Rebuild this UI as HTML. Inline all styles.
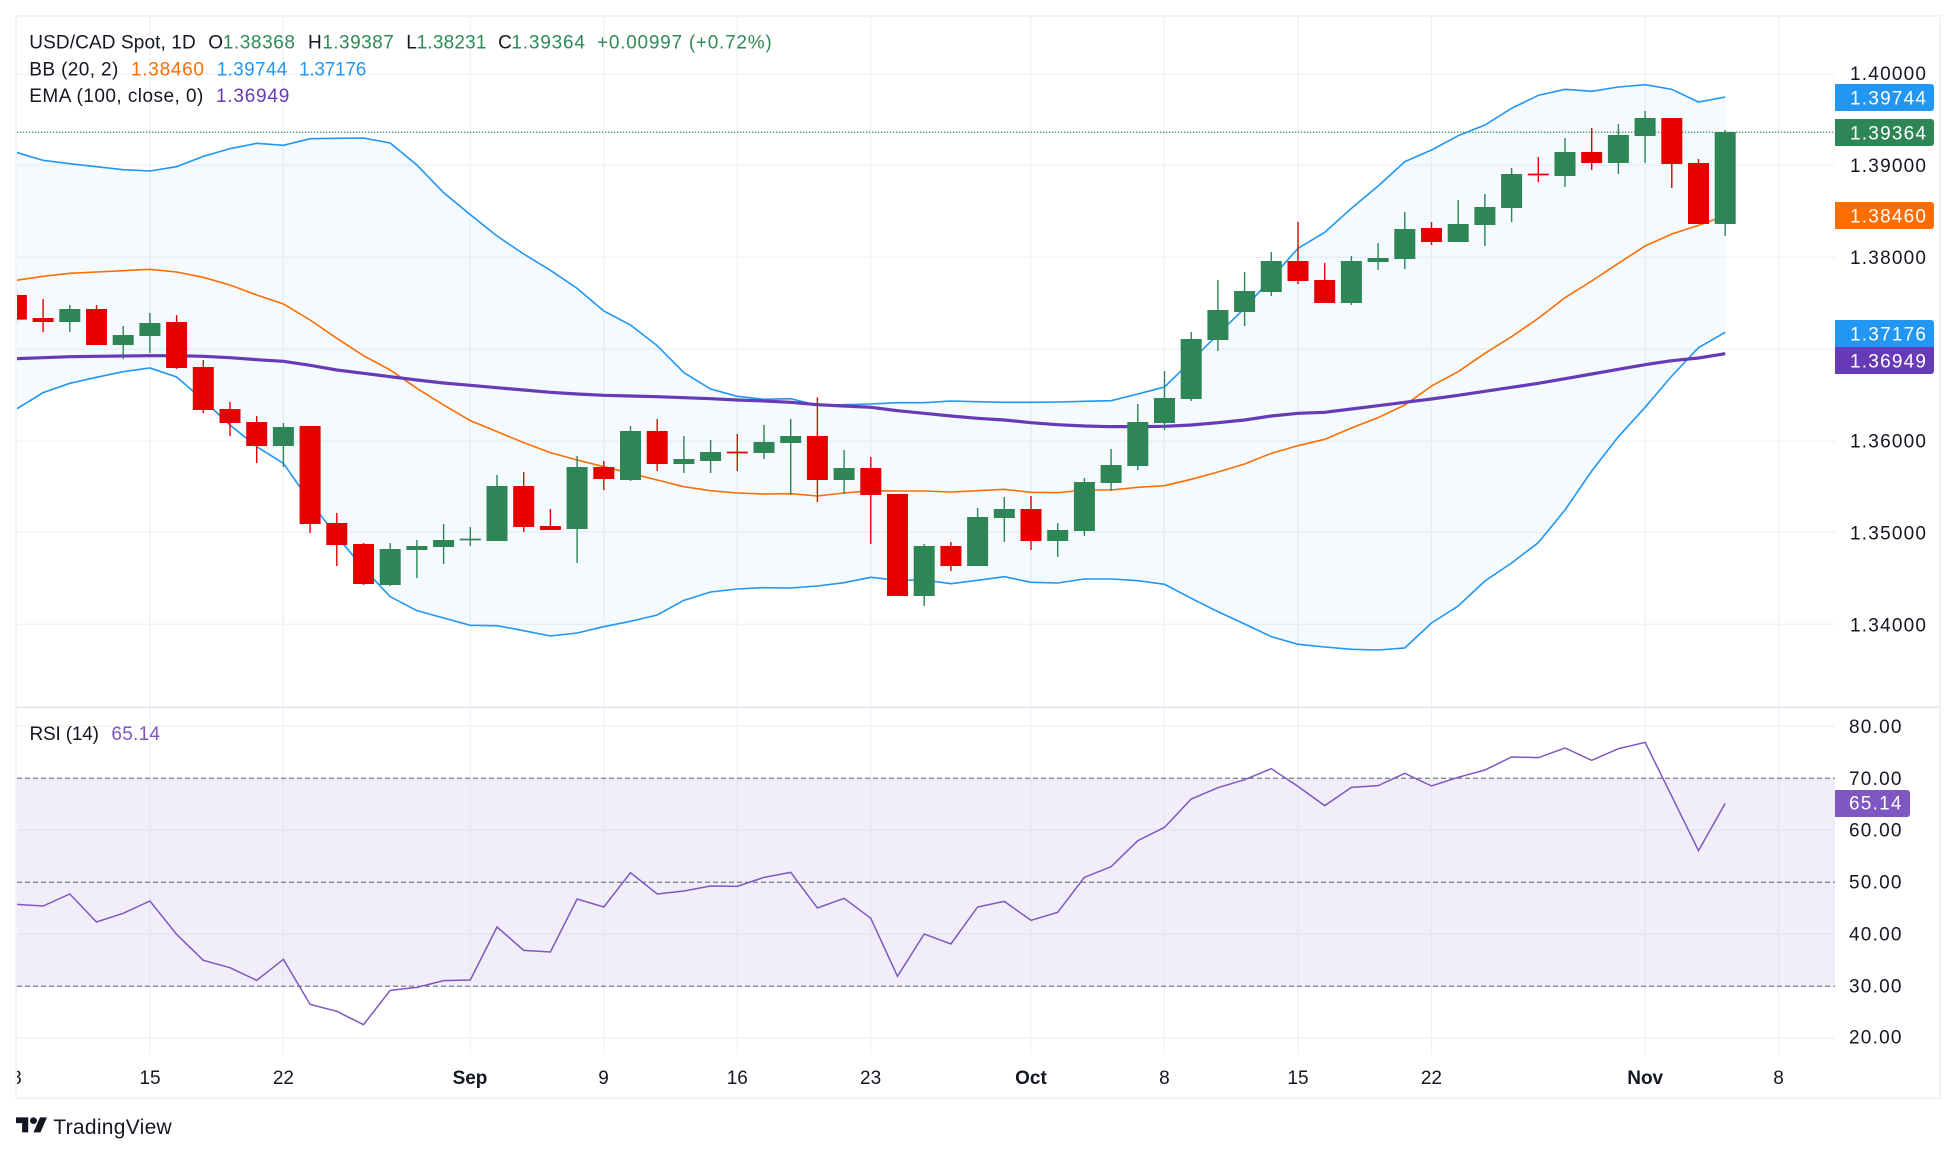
<!DOCTYPE html>
<html lang="en"><head><meta charset="utf-8"><title>USD/CAD Spot</title>
<style>
html,body{margin:0;padding:0;background:#fff;width:1956px;height:1154px;overflow:hidden}
svg{display:block}
text{font-family:"Liberation Sans",sans-serif;font-size:19px;fill:#131722}
.g{fill:#2e8b57}.w{fill:#fff}
.m{text-anchor:middle}.b{font-weight:700}
.l{fill:none;vector-effect:non-scaling-stroke;stroke-linejoin:miter}
</style></head><body>
<svg width="1956" height="1154" viewBox="0 0 1956 1154" xmlns="http://www.w3.org/2000/svg">
<defs><clipPath id="c"><rect x="17" y="17" width="1818" height="1037"/></clipPath>
<clipPath id="t"><rect x="17" y="1054" width="1922" height="42"/></clipPath></defs>
<rect width="1956" height="1154" fill="#fff"/>
<rect x="16" y="16" width="1924" height="1082" fill="#fff" stroke="#f0f3fa" stroke-width="2"/>

<!-- RSI band -->
<rect x="17" y="778.3" width="1818" height="208" fill="#7e57c2" fill-opacity=".1"/>

<!-- grid -->
<g stroke="#f0f3fa" stroke-width="1.5" fill="none">
<path d="M17 74.3H1835M17 165.3H1835M17 257.3H1835M17 349.3H1835M17 441.3H1835M17 532.3H1835M17 624.3H1835M17 726.3H1835M17 830.3H1835M17 934.3H1835M17 1038.3H1835"/>
<path d="M150 17V1054M283.4 17V1054M470.3 17V1054M603.6 17V1054M737.3 17V1054M870.6 17V1054M1031 17V1054M1164.4 17V1054M1298 17V1054M1431.4 17V1054M1645.2 17V1054M1778.5 17V1054"/>
</g>
<g stroke="#131722" stroke-opacity=".05" stroke-width="1.5" fill="none">
<path d="M17 830.3H1835M17 934.3H1835M150 778V986M283.4 778V986M470.3 778V986M603.6 778V986M737.3 778V986M870.6 778V986M1031 778V986M1164.4 778V986M1298 778V986M1431.4 778V986M1645.2 778V986M1778.5 778V986"/>
</g>
<rect x="17" y="706.5" width="1922" height="1.5" fill="#e0e3eb"/>
<path d="M17 778.3H1835M17 882.3H1835M17 986.3H1835" stroke="#787b86" stroke-width="1.25" stroke-dasharray="5 3" fill="none"/>

<g clip-path="url(#c)">
<g transform="translate(16.4,0) scale(26.7,.33333)">
<polygon fill="#2196f3" fill-opacity=".05" points="0,457 1,481 2,491 3,500 4,509 5,513 6,500 7,469 8,446 9,430 10,436 11,416 12,415 13,414 14,429 15,495 16,578 17,644 18,708 19,762 20,811 21,865 22,933 23,975 24,1037 25,1118 26,1167 27,1189 28,1198 29,1196 30,1216 31,1214 32,1212 33,1208 34,1208 35,1203 36,1205 37,1207 38,1207 39,1206 40,1204 41,1202 42,1182 43,1161 44,1083 45,1003 46,925 47,835 48,745 49,697 50,625 51,558 52,485 53,450 54,407 55,375 56,325 57,286 58,268 59,274 60,261 61,254 62,268 63,306 64,291 64,997 63,1043 62,1128 61,1222 60,1310 59,1413 58,1530 57,1628 56,1689 55,1743 54,1818 53,1869 52,1944 51,1950 50,1948 49,1941 48,1933 47,1910 46,1872 45,1835 44,1795 43,1753 42,1742 41,1737 40,1737 39,1749 38,1747 37,1730 36,1741 35,1751 34,1740 33,1741 32,1732 31,1748 30,1758 29,1764 28,1763 27,1767 26,1776 25,1801 24,1845 23,1864 22,1880 21,1899 20,1908 19,1892 18,1877 17,1876 16,1854 15,1832 14,1790 13,1705 12,1608 11,1505 10,1390 9,1340 8,1275 7,1200 6,1131 5,1104 4,1115 3,1132 2,1150 1,1178 0,1227"/>
<polyline class="l" stroke="#2196f3" stroke-width="1.6" points="0,457 1,481 2,491 3,500 4,509 5,513 6,500 7,469 8,446 9,430 10,436 11,416 12,415 13,414 14,429 15,495 16,578 17,644 18,708 19,762 20,811 21,865 22,933 23,975 24,1037 25,1118 26,1167 27,1189 28,1198 29,1196 30,1216 31,1214 32,1212 33,1208 34,1208 35,1203 36,1205 37,1207 38,1207 39,1206 40,1204 41,1202 42,1182 43,1161 44,1083 45,1003 46,925 47,835 48,745 49,697 50,625 51,558 52,485 53,450 54,407 55,375 56,325 57,286 58,268 59,274 60,261 61,254 62,268 63,306 64,291"/>
<polyline class="l" stroke="#2196f3" stroke-width="1.6" points="0,1227 1,1178 2,1150 3,1132 4,1115 5,1104 6,1131 7,1200 8,1275 9,1340 10,1390 11,1505 12,1608 13,1705 14,1790 15,1832 16,1854 17,1876 18,1877 19,1892 20,1908 21,1899 22,1880 23,1864 24,1845 25,1801 26,1776 27,1767 28,1763 29,1764 30,1758 31,1748 32,1732 33,1741 34,1740 35,1751 36,1741 37,1730 38,1747 39,1749 40,1737 41,1737 42,1742 43,1753 44,1795 45,1835 46,1872 47,1910 48,1933 49,1941 50,1948 51,1950 52,1944 53,1869 54,1818 55,1743 56,1689 57,1628 58,1530 59,1413 60,1310 61,1222 62,1128 63,1043 64,997"/>
<polyline class="l" stroke="#ff6d00" stroke-width="1.6" points="0,841 1,829 2,820 3,816 4,812 5,808 6,816 7,832 8,855 9,885 10,912 11,960 12,1015 13,1067 14,1110 15,1165 16,1215 17,1262 18,1295 19,1328 20,1358 21,1380 22,1400 23,1420 24,1440 25,1460 26,1472 27,1479 28,1482 29,1481 30,1488 31,1479 32,1472 33,1473 34,1473 35,1476 36,1472 37,1468 38,1477 39,1478 40,1470 41,1470 42,1462 43,1457 44,1438 45,1416 46,1392 47,1360 48,1337 49,1318 50,1284 51,1253 52,1215 53,1158 54,1115 55,1060 56,1010 57,955 58,893 59,843 60,790 61,738 62,702 63,676 64,647"/>
<polyline class="l" stroke="#673ab7" stroke-width="3.2" points="0,1076 1,1073 2,1070 3,1069 4,1068 5,1067 6,1067 7,1069 8,1073 9,1079 10,1084 11,1096 12,1110 13,1120 14,1130 15,1140 16,1149 17,1156 18,1163 19,1170 20,1177 21,1182 22,1186 23,1188 24,1190 25,1193 26,1196 27,1200 28,1203 29,1207 30,1214 31,1218 32,1222 33,1232 34,1240 35,1248 36,1255 37,1260 38,1268 39,1274 40,1278 41,1280 42,1280 43,1279 44,1275 45,1268 46,1260 47,1248 48,1240 49,1237 50,1227 51,1217 52,1207 53,1197 54,1186 55,1174 56,1162 57,1150 58,1136 59,1122 60,1108 61,1094 62,1082 63,1074 64,1061"/>
</g>
<path d="M17 132.3H1835" stroke="#2e8b57" stroke-width="1.25" stroke-dasharray="1.25 1.75" fill="none"/>
<g transform="translate(16.4,0) scale(26.7,.33333)">
<path class="l" stroke="#e60000" stroke-width="1.4" d="M0 867V975M1 897V996M3 915V1035M6 945V1107M7 1080V1239M8 1206V1308M9 1248V1389M11 1278V1599M12 1539V1698M13 1629V1755M19 1416V1596M20 1527V1590M22 1383V1470M24 1257V1413M27 1302V1413M30 1192V1506M32 1371V1632M33 1482V1788M35 1626V1713M38 1488V1650M48 666V852M49 789V909M53 666V735M57 471V546M59 384V510M62 354V564M63 477V672"/>
<path class="l" stroke="#e60000" stroke-width="21" d="M0 885V959M1 954V966M3 927V1035M6 966V1104M7 1101V1230M8 1227V1269M9 1266V1338M11 1278V1572M12 1569V1635M13 1632V1752M19 1458V1581M20 1578V1590M22 1401V1437M24 1293V1392M27 1355V1360M30 1308V1440M32 1404V1485M33 1482V1788M35 1638V1698M38 1527V1623M48 783V843M49 840V909M53 684V726M57 521V526M59 456V489M62 354V492M63 489V672"/>
<path class="l" stroke="#2e8656" stroke-width="1.4" d="M2 915V996M4 978V1077M5 939V1059M10 1269V1401M14 1629V1758M15 1620V1734M16 1572V1692M17 1581V1638M18 1425V1623M21 1368V1689M23 1278V1443M25 1308V1419M26 1320V1419M28 1275V1377M29 1257V1485M31 1350V1482M34 1632V1818M36 1524V1698M37 1491V1626M39 1569V1671M40 1434V1608M41 1347V1473M42 1212V1410M43 1113V1290M44 996V1203M45 840V1053M46 816V978M47 756V888M50 768V915M51 729V810M52 636V807M54 600V726M55 582V738M56 504V666M58 414V561M60 372V522M61 333V489M64 390V708"/>
<path class="l" stroke="#2e8656" stroke-width="21" d="M2 927V966M4 1005V1035M5 969V1008M10 1281V1338M14 1647V1755M15 1638V1650M16 1620V1641M17 1616V1621M18 1458V1623M21 1401V1587M23 1293V1440M25 1377V1392M26 1356V1383M28 1326V1359M29 1308V1329M31 1404V1440M34 1638V1788M36 1551V1698M37 1527V1554M39 1590V1623M40 1446V1593M41 1395V1449M42 1266V1398M43 1194V1269M44 1017V1197M45 930V1020M46 873V936M47 783V876M50 783V909M51 774V786M52 687V777M54 672V726M55 621V675M56 522V624M58 456V528M60 405V489M61 354V408M64 396V672"/>
</g>
<g transform="translate(16.4,754) scale(26.7,.33333)">
<polyline class="l" stroke="#7e57c2" stroke-width="1.5" points="0,451 1,456 2,420 3,504 4,478 5,441 6,541 7,619 8,641 9,679 10,616 11,751 12,772 13,812 14,709 15,700 16,680 17,678 18,519 19,589 20,594 21,435 22,459 23,356 24,420 25,411 26,396 27,397 28,370 29,355 30,462 31,433 32,493 33,667 34,540 35,570 36,459 37,442 38,499 39,475 40,370 41,338 42,260 43,220 44,135 45,101 46,77 47,44 48,97 49,155 50,100 51,95 52,58 53,96 54,70 55,48 56,9 57,11 58,-18 59,19 60,-16 61,-35 62,127 63,290 64,148"/>
</g>
</g>

<!-- legend -->
<text x="29.3" y="48.5" textLength="166.4">USD/CAD Spot, 1D</text>
<text x="208.3" y="48.5">O</text><text class="g" x="222.7" y="48.5" textLength="72.3">1.38368</text>
<text x="308" y="48.5">H</text><text class="g" x="322.2" y="48.5" textLength="71.6">1.39387</text>
<text x="406.2" y="48.5">L</text><text class="g" x="416.6" y="48.5" textLength="69.9">1.38231</text>
<text x="498.1" y="48.5">C</text><text class="g" x="511.4" y="48.5" textLength="73.6">1.39364</text>
<text class="g" x="597" y="48.5" textLength="174.7">+0.00997 (+0.72%)</text>
<text x="29.3" y="75.5" textLength="89">BB (20, 2)</text>
<text x="131" y="75.5" textLength="73" style="fill:#ff6d00">1.38460</text>
<text x="216.7" y="75.5" textLength="70.6" style="fill:#2196f3">1.39744</text>
<text x="299" y="75.5" textLength="67.3" style="fill:#2196f3">1.37176</text>
<text x="29.3" y="102" textLength="174">EMA (100, close, 0)</text>
<text x="216" y="102" textLength="73.3" style="fill:#673ab7">1.36949</text>
<text x="29.5" y="740" textLength="69.5">RSI (14)</text>
<text x="111.4" y="740" textLength="48.6" style="fill:#7e57c2">65.14</text>

<!-- price axis -->
<text x="1850" y="80" textLength="76">1.40000</text>
<text x="1850" y="172" textLength="76">1.39000</text>
<text x="1850" y="264" textLength="76">1.38000</text>
<text x="1850" y="447.5" textLength="76">1.36000</text>
<text x="1850" y="539.5" textLength="76">1.35000</text>
<text x="1850" y="631.5" textLength="76">1.34000</text>
<path d="M1835 84H1931a3 3 0 0 1 3 3V108a3 3 0 0 1-3 3H1835z" fill="#2196f3"/>
<path d="M1835 119H1931a3 3 0 0 1 3 3V143a3 3 0 0 1-3 3H1835z" fill="#2e8656"/>
<path d="M1835 202H1931a3 3 0 0 1 3 3V226a3 3 0 0 1-3 3H1835z" fill="#ff6d00"/>
<path d="M1835 320H1931a3 3 0 0 1 3 3V347H1835z" fill="#2196f3"/>
<path d="M1835 347H1934V371a3 3 0 0 1-3 3H1835z" fill="#673ab7"/>
<text class="w" x="1850" y="104.3" textLength="76">1.39744</text>
<text class="w" x="1850" y="139.3" textLength="76">1.39364</text>
<text class="w" x="1850" y="222.3" textLength="76">1.38460</text>
<text class="w" x="1850" y="340.3" textLength="76">1.37176</text>
<text class="w" x="1850" y="367.3" textLength="76">1.36949</text>

<!-- RSI axis -->
<text x="1849" y="733" textLength="52.5">80.00</text>
<text x="1849" y="785" textLength="52.5">70.00</text>
<text x="1849" y="836.7" textLength="52.5">60.00</text>
<text x="1849" y="888.7" textLength="52.5">50.00</text>
<text x="1849" y="940.7" textLength="52.5">40.00</text>
<text x="1849" y="992.7" textLength="52.5">30.00</text>
<text x="1849" y="1043.7" textLength="52.5">20.00</text>
<path d="M1835 790H1907a3 3 0 0 1 3 3V814a3 3 0 0 1-3 3H1835z" fill="#7e57c2"/>
<text class="w" x="1849" y="809.7" textLength="52.5">65.14</text>

<!-- time axis -->
<g clip-path="url(#t)"><text class="m" x="16.4" y="1084">8</text></g>
<text class="m" x="150" y="1084">15</text>
<text class="m" x="283.4" y="1084">22</text>
<text class="m b" x="470" y="1084">Sep</text>
<text class="m" x="603.6" y="1084">9</text>
<text class="m" x="737.3" y="1084">16</text>
<text class="m" x="870.6" y="1084">23</text>
<text class="m b" x="1031" y="1084">Oct</text>
<text class="m" x="1164.4" y="1084">8</text>
<text class="m" x="1298" y="1084">15</text>
<text class="m" x="1431.4" y="1084">22</text>
<text class="m b" x="1645.2" y="1084">Nov</text>
<text class="m" x="1778.5" y="1084">8</text>

<!-- TradingView logo -->
<g transform="translate(16,1114) scale(.873,.833)" fill="#131722">
<path d="M14 22H7V11H0V4h14v18zM28 22h-8l7.5-18h8L28 22z"/><circle cx="20" cy="8" r="4"/>
</g>
<text x="53.3" y="1134" textLength="118.4" style="font-size:21px">TradingView</text>
</svg>
</body></html>
